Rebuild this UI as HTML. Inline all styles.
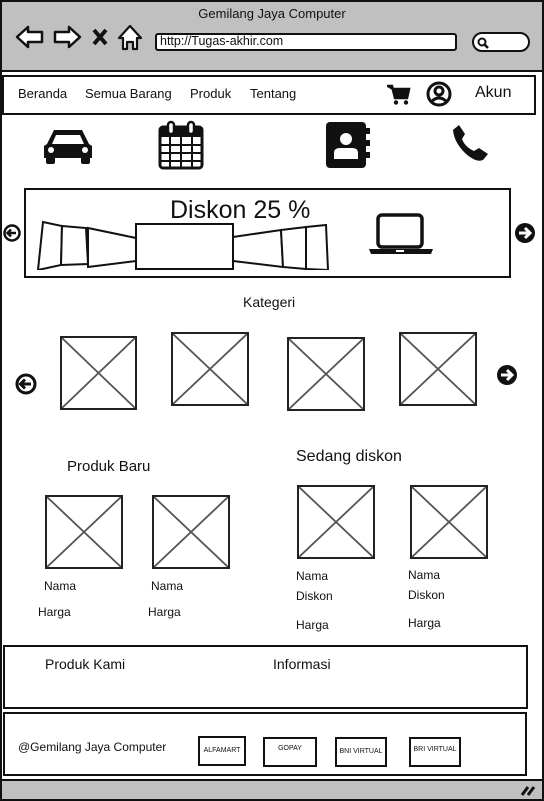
<!DOCTYPE html>
<html><head><meta charset="utf-8"><style>
*{margin:0;padding:0;box-sizing:border-box}
body{width:544px;height:801px;position:relative;background:#fff;font-family:"Liberation Sans",sans-serif;color:#111;overflow:hidden}
.a{position:absolute}
.b{position:absolute;border:2px solid #111}
.t{position:absolute;white-space:nowrap}
.ph{position:absolute;border:2.5px solid #222;background:#fff}
.ph svg{position:absolute;left:0;top:0;width:100%;height:100%}
.pay{position:absolute;border:2.5px solid #111;font-size:7px;text-align:center;line-height:26px;height:30px}
</style></head><body>
<div class="b" style="left:0;top:0;width:544px;height:801px;border-width:2px"></div>
<div class="a" style="left:2px;top:2px;width:540px;height:70px;background:#c0c0c0;border-bottom:2px solid #111"></div>
<div class="t" style="left:0;width:544px;text-align:center;top:6px;font-size:13px">Gemilang Jaya Computer</div>
<svg class="a" style="left:14px;top:22px" width="130" height="30" viewBox="0 0 130 30">
<path d="M3 15 L14 5 L14 10 L28 10 L28 20 L14 20 L14 25 Z" fill="#fff" stroke="#111" stroke-width="2.5" stroke-linejoin="round"/>
<path d="M66 15 L55 5 L55 10 L41 10 L41 20 L55 20 L55 25 Z" fill="#fff" stroke="#111" stroke-width="2.5" stroke-linejoin="round"/>
<path d="M80 8 L92 22 M92 8 L80 22" stroke="#111" stroke-width="4"/>
<path d="M105 16 L116 4 L127 16 L123 16 L123 27 L119 27 L119 20 L113 20 L113 27 L109 27 L109 16 Z" fill="#fff" stroke="#111" stroke-width="2.2" stroke-linejoin="round"/>
</svg>
<div class="a" style="left:155px;top:33px;width:302px;height:18px;background:#fff;border:2.5px solid #111;border-radius:3px"></div>
<div class="t" style="left:160px;top:34px;font-size:12.5px">http://Tugas-akhir.com</div>
<div class="a" style="left:472px;top:32px;width:58px;height:20px;background:#fff;border:2.5px solid #111;border-radius:12px"></div>
<svg class="a" style="left:476px;top:36px" width="14" height="14"><circle cx="6" cy="6" r="3.5" fill="none" stroke="#111" stroke-width="2"/><path d="M8.5 8.5 L12 12" stroke="#111" stroke-width="2.5"/></svg>

<div class="b" style="left:2px;top:75px;width:534px;height:40px;border-width:2.5px"></div>
<div class="t" style="left:18px;top:86px;font-size:13px">Beranda</div>
<div class="t" style="left:85px;top:86px;font-size:13px">Semua Barang</div>
<div class="t" style="left:190px;top:86px;font-size:13px">Produk</div>
<div class="t" style="left:250px;top:86px;font-size:13px">Tentang</div>
<svg class="a" style="left:387px;top:84px" width="24" height="22" viewBox="0 0 24 22"><path d="M1 2 L5 2 L8 14 L20 14 L22 5 L6 5 Z" fill="#111" stroke="#111" stroke-width="2.5"/><circle cx="9" cy="18.5" r="2.2" fill="#111"/><circle cx="19" cy="18.5" r="2.2" fill="#111"/></svg>
<svg class="a" style="left:426px;top:81px" width="26" height="26" viewBox="0 0 26 26"><circle cx="13" cy="13" r="11" fill="none" stroke="#111" stroke-width="3"/><circle cx="13" cy="10" r="4" fill="none" stroke="#111" stroke-width="3"/><path d="M5 21 Q13 13 21 21" fill="none" stroke="#111" stroke-width="3"/></svg>
<div class="t" style="left:475px;top:84px;font-size:16px">Akun</div>

<svg class="a" style="left:42px;top:126px" width="52" height="40" viewBox="0 0 52 40"><path d="M12 4 L40 4 L47 18 L50 20 L50 32 L2 32 L2 20 L5 18 Z" fill="#111"/><path d="M14 9 L38 9 L42 18 L10 18 Z" fill="#fff"/><circle cx="9" cy="24" r="3" fill="#fff"/><circle cx="43" cy="24" r="3" fill="#fff"/><rect x="4" y="30" width="9" height="8" rx="2" fill="#111"/><rect x="39" y="30" width="9" height="8" rx="2" fill="#111"/></svg>
<svg class="a" style="left:157px;top:120px" width="48" height="50" viewBox="0 0 48 50"><rect x="3" y="7" width="42" height="41" rx="3" fill="#fff" stroke="#111" stroke-width="3"/><rect x="3" y="7" width="42" height="10" fill="#111"/><rect x="11" y="2" width="6" height="12" rx="3" fill="#fff" stroke="#111" stroke-width="2.5"/><rect x="31" y="2" width="6" height="12" rx="3" fill="#fff" stroke="#111" stroke-width="2.5"/><path d="M3 25 H45 M3 33 H45 M3 41 H45 M13 17 V48 M24 17 V48 M35 17 V48" stroke="#111" stroke-width="2"/></svg>
<svg class="a" style="left:325px;top:121px" width="46" height="48" viewBox="0 0 46 48"><rect x="1" y="1" width="40" height="46" rx="4" fill="#111"/><rect x="40" y="7" width="5" height="6" fill="#111"/><rect x="40" y="19" width="5" height="6" fill="#111"/><rect x="40" y="31" width="5" height="6" fill="#111"/><circle cx="21" cy="18" r="6" fill="#fff"/><path d="M9 38 L9 32 Q9 27 15 27 L27 27 Q33 27 33 32 L33 38 Z" fill="#fff"/></svg>
<svg class="a" style="left:450px;top:123px" width="40" height="40" viewBox="0 0 40 40"><path d="M3 7 L9 2 L15 11 L12 16 Q15 24 24 28 L29 25 L38 31 L33 37 Q26 40 15 30 Q4 19 3 7 Z" fill="#111"/></svg>

<div class="b" style="left:24px;top:188px;width:487px;height:90px;border-width:2px"></div>
<div class="t" style="left:170px;top:196px;font-size:25px">Diskon 25 %</div>
<svg class="a" style="left:36px;top:220px" width="296" height="50" viewBox="0 0 296 50" fill="#fff" stroke="#111" stroke-width="2">
<path d="M7 2 L26 6 L25 45 L2 50 Z"/><path d="M26 6 L50 8 L52 44 L25 45 Z"/><path d="M52 8 L100 18 L100 41 L52 47 Z"/>
<rect x="100" y="4" width="97" height="45"/>
<path d="M197 17 L245 10 L247 47 L197 41 Z"/><path d="M245 10 L270 7 L270 49 L247 47 Z"/><path d="M270 7 L290 5 L292 50 L270 49 Z"/>
</svg>
<svg class="a" style="left:368px;top:212px" width="66" height="44" viewBox="0 0 66 44"><rect x="10" y="3" width="44" height="32" rx="4" fill="#fff" stroke="#111" stroke-width="3.5"/><path d="M1 37 H65 L63 42 H3 Z" fill="#111"/><rect x="28" y="38" width="8" height="2" fill="#fff"/></svg>
<svg class="a" style="left:3px;top:224px" width="18" height="18"><circle cx="9" cy="9" r="7.5" fill="#fff" stroke="#111" stroke-width="2.5"/><path d="M13 9 H5 M8 5.5 L4.5 9 L8 12.5" fill="none" stroke="#111" stroke-width="2.5"/></svg>
<svg class="a" style="left:514px;top:222px" width="22" height="22"><circle cx="11" cy="11" r="10" fill="#111"/><path d="M5 11 H15 M11 6 L16 11 L11 16" fill="none" stroke="#fff" stroke-width="3"/></svg>

<div class="t" style="left:243px;top:294px;font-size:14px">Kategeri</div>
<svg class="a" style="left:15px;top:373px" width="22" height="22"><circle cx="11" cy="11" r="9" fill="#fff" stroke="#111" stroke-width="3"/><path d="M16 11 H6 M10 6.5 L5.5 11 L10 15.5" fill="none" stroke="#111" stroke-width="3"/></svg>
<svg class="a" style="left:496px;top:364px" width="22" height="22"><circle cx="11" cy="11" r="10" fill="#111"/><path d="M5 11 H15 M11 6 L16 11 L11 16" fill="none" stroke="#fff" stroke-width="3"/></svg>

<div class="ph" style="left:60px;top:336px;width:77px;height:74px"><svg viewBox="0 0 10 10" preserveAspectRatio="none"><path d="M0 0 L10 10 M10 0 L0 10" stroke="#555" stroke-width=".25"/></svg></div>
<div class="ph" style="left:171px;top:332px;width:78px;height:74px"><svg viewBox="0 0 10 10" preserveAspectRatio="none"><path d="M0 0 L10 10 M10 0 L0 10" stroke="#555" stroke-width=".25"/></svg></div>
<div class="ph" style="left:287px;top:337px;width:78px;height:74px"><svg viewBox="0 0 10 10" preserveAspectRatio="none"><path d="M0 0 L10 10 M10 0 L0 10" stroke="#555" stroke-width=".25"/></svg></div>
<div class="ph" style="left:399px;top:332px;width:78px;height:74px"><svg viewBox="0 0 10 10" preserveAspectRatio="none"><path d="M0 0 L10 10 M10 0 L0 10" stroke="#555" stroke-width=".25"/></svg></div>

<div class="t" style="left:67px;top:458px;font-size:15px">Produk Baru</div>
<div class="t" style="left:296px;top:448px;font-size:16px">Sedang diskon</div>
<div class="ph" style="left:45px;top:495px;width:78px;height:74px"><svg viewBox="0 0 10 10" preserveAspectRatio="none"><path d="M0 0 L10 10 M10 0 L0 10" stroke="#555" stroke-width=".25"/></svg></div>
<div class="ph" style="left:152px;top:495px;width:78px;height:74px"><svg viewBox="0 0 10 10" preserveAspectRatio="none"><path d="M0 0 L10 10 M10 0 L0 10" stroke="#555" stroke-width=".25"/></svg></div>
<div class="ph" style="left:297px;top:485px;width:78px;height:74px"><svg viewBox="0 0 10 10" preserveAspectRatio="none"><path d="M0 0 L10 10 M10 0 L0 10" stroke="#555" stroke-width=".25"/></svg></div>
<div class="ph" style="left:410px;top:485px;width:78px;height:74px"><svg viewBox="0 0 10 10" preserveAspectRatio="none"><path d="M0 0 L10 10 M10 0 L0 10" stroke="#555" stroke-width=".25"/></svg></div>

<div class="t" style="left:44px;top:579px;font-size:12px">Nama</div>
<div class="t" style="left:38px;top:605px;font-size:12px">Harga</div>
<div class="t" style="left:151px;top:579px;font-size:12px">Nama</div>
<div class="t" style="left:148px;top:605px;font-size:12px">Harga</div>
<div class="t" style="left:296px;top:569px;font-size:12px">Nama</div>
<div class="t" style="left:296px;top:589px;font-size:12px">Diskon</div>
<div class="t" style="left:296px;top:618px;font-size:12px">Harga</div>
<div class="t" style="left:408px;top:568px;font-size:12px">Nama</div>
<div class="t" style="left:408px;top:588px;font-size:12px">Diskon</div>
<div class="t" style="left:408px;top:616px;font-size:12px">Harga</div>

<div class="b" style="left:3px;top:645px;width:525px;height:64px;border-width:2.5px"></div>
<div class="t" style="left:45px;top:656px;font-size:14px">Produk Kami</div>
<div class="t" style="left:273px;top:656px;font-size:14px">Informasi</div>
<div class="b" style="left:3px;top:712px;width:524px;height:64px;border-width:2.5px"></div>
<div class="t" style="left:18px;top:740px;font-size:12px">@Gemilang Jaya Computer</div>
<div class="pay" style="left:198px;top:736px;width:48px">ALFAMART</div>
<div class="pay" style="left:263px;top:737px;width:54px;line-height:20px">GOPAY</div>
<div class="pay" style="left:335px;top:737px;width:52px">BNI VIRTUAL</div>
<div class="pay" style="left:409px;top:737px;width:52px;line-height:22px">BRI VIRTUAL</div>

<div class="a" style="left:2px;top:779px;width:540px;height:20px;background:#c0c0c0;border-top:2px solid #111"></div>
<svg class="a" style="left:520px;top:784px" width="16" height="12"><path d="M2 11 L8 3 M8 11 L14 3" stroke="#111" stroke-width="3"/></svg>
</body></html>
